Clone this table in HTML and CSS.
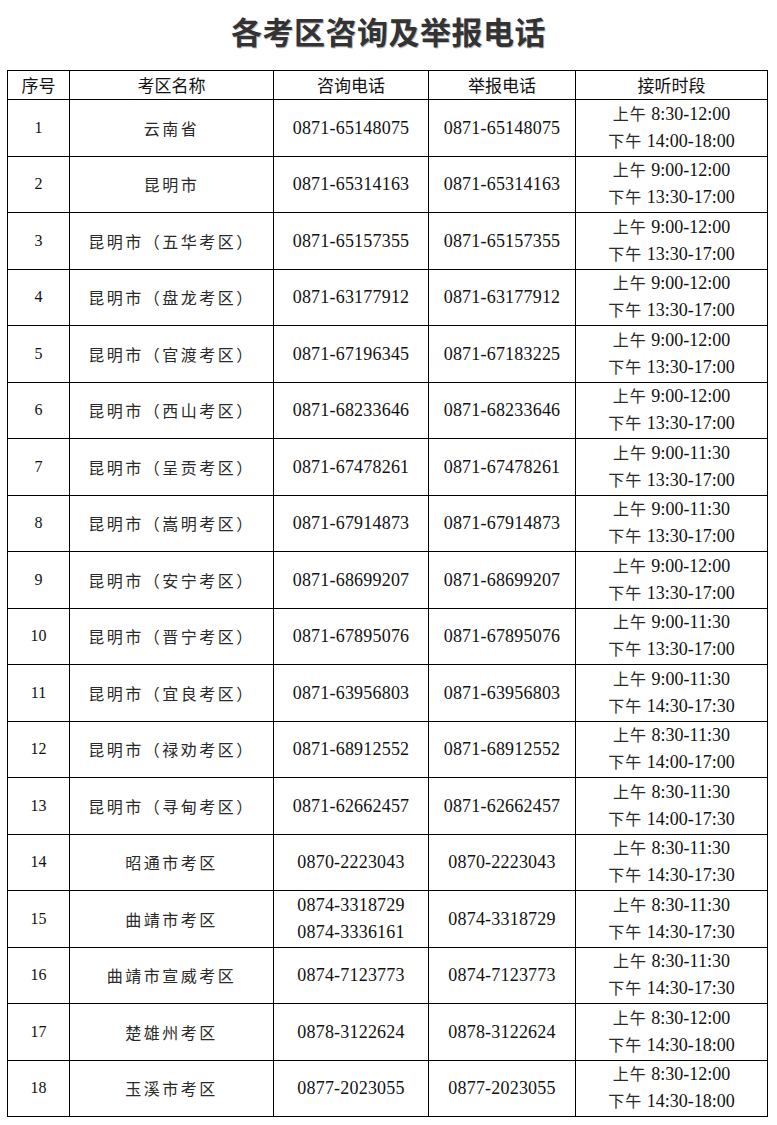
FILE: index.html
```html
<!DOCTYPE html>
<html lang="zh-CN">
<head>
<meta charset="utf-8">
<title>各考区咨询及举报电话</title>
<link rel="stylesheet" href="styles.css">
</head>
<body>
<h1 class="title">各考区咨询及举报电话</h1>
<table class="contacts">
  <colgroup>
    <col class="c-no">
    <col class="c-name">
    <col class="c-tel">
    <col class="c-rep">
    <col class="c-time">
  </colgroup>
  <thead>
    <tr>
      <th>序号</th><th>考区名称</th><th>咨询电话</th><th>举报电话</th><th>接听时段</th>
    </tr>
  </thead>
  <tbody>
    <tr><td class="no">1</td><td class="name">云南省</td><td class="tel">0871-65148075</td><td class="tel">0871-65148075</td><td class="time"><div><span class="cn">上午</span> 8:30-12:00</div><div><span class="cn">下午</span> 14:00-18:00</div></td></tr>
    <tr><td class="no">2</td><td class="name">昆明市</td><td class="tel">0871-65314163</td><td class="tel">0871-65314163</td><td class="time"><div><span class="cn">上午</span> 9:00-12:00</div><div><span class="cn">下午</span> 13:30-17:00</div></td></tr>
    <tr><td class="no">3</td><td class="name">昆明市（五华考区）</td><td class="tel">0871-65157355</td><td class="tel">0871-65157355</td><td class="time"><div><span class="cn">上午</span> 9:00-12:00</div><div><span class="cn">下午</span> 13:30-17:00</div></td></tr>
    <tr><td class="no">4</td><td class="name">昆明市（盘龙考区）</td><td class="tel">0871-63177912</td><td class="tel">0871-63177912</td><td class="time"><div><span class="cn">上午</span> 9:00-12:00</div><div><span class="cn">下午</span> 13:30-17:00</div></td></tr>
    <tr><td class="no">5</td><td class="name">昆明市（官渡考区）</td><td class="tel">0871-67196345</td><td class="tel">0871-67183225</td><td class="time"><div><span class="cn">上午</span> 9:00-12:00</div><div><span class="cn">下午</span> 13:30-17:00</div></td></tr>
    <tr><td class="no">6</td><td class="name">昆明市（西山考区）</td><td class="tel">0871-68233646</td><td class="tel">0871-68233646</td><td class="time"><div><span class="cn">上午</span> 9:00-12:00</div><div><span class="cn">下午</span> 13:30-17:00</div></td></tr>
    <tr><td class="no">7</td><td class="name">昆明市（呈贡考区）</td><td class="tel">0871-67478261</td><td class="tel">0871-67478261</td><td class="time"><div><span class="cn">上午</span> 9:00-11:30</div><div><span class="cn">下午</span> 13:30-17:00</div></td></tr>
    <tr><td class="no">8</td><td class="name">昆明市（嵩明考区）</td><td class="tel">0871-67914873</td><td class="tel">0871-67914873</td><td class="time"><div><span class="cn">上午</span> 9:00-11:30</div><div><span class="cn">下午</span> 13:30-17:00</div></td></tr>
    <tr><td class="no">9</td><td class="name">昆明市（安宁考区）</td><td class="tel">0871-68699207</td><td class="tel">0871-68699207</td><td class="time"><div><span class="cn">上午</span> 9:00-12:00</div><div><span class="cn">下午</span> 13:30-17:00</div></td></tr>
    <tr><td class="no">10</td><td class="name">昆明市（晋宁考区）</td><td class="tel">0871-67895076</td><td class="tel">0871-67895076</td><td class="time"><div><span class="cn">上午</span> 9:00-11:30</div><div><span class="cn">下午</span> 13:30-17:00</div></td></tr>
    <tr><td class="no">11</td><td class="name">昆明市（宜良考区）</td><td class="tel">0871-63956803</td><td class="tel">0871-63956803</td><td class="time"><div><span class="cn">上午</span> 9:00-11:30</div><div><span class="cn">下午</span> 14:30-17:30</div></td></tr>
    <tr><td class="no">12</td><td class="name">昆明市（禄劝考区）</td><td class="tel">0871-68912552</td><td class="tel">0871-68912552</td><td class="time"><div><span class="cn">上午</span> 8:30-11:30</div><div><span class="cn">下午</span> 14:00-17:00</div></td></tr>
    <tr><td class="no">13</td><td class="name">昆明市（寻甸考区）</td><td class="tel">0871-62662457</td><td class="tel">0871-62662457</td><td class="time"><div><span class="cn">上午</span> 8:30-11:30</div><div><span class="cn">下午</span> 14:00-17:30</div></td></tr>
    <tr><td class="no">14</td><td class="name">昭通市考区</td><td class="tel">0870-2223043</td><td class="tel">0870-2223043</td><td class="time"><div><span class="cn">上午</span> 8:30-11:30</div><div><span class="cn">下午</span> 14:30-17:30</div></td></tr>
    <tr><td class="no">15</td><td class="name">曲靖市考区</td><td class="tel"><div>0874-3318729</div><div>0874-3336161</div></td><td class="tel">0874-3318729</td><td class="time"><div><span class="cn">上午</span> 8:30-11:30</div><div><span class="cn">下午</span> 14:30-17:30</div></td></tr>
    <tr><td class="no">16</td><td class="name">曲靖市宣威考区</td><td class="tel">0874-7123773</td><td class="tel">0874-7123773</td><td class="time"><div><span class="cn">上午</span> 8:30-11:30</div><div><span class="cn">下午</span> 14:30-17:30</div></td></tr>
    <tr><td class="no">17</td><td class="name">楚雄州考区</td><td class="tel">0878-3122624</td><td class="tel">0878-3122624</td><td class="time"><div><span class="cn">上午</span> 8:30-12:00</div><div><span class="cn">下午</span> 14:30-18:00</div></td></tr>
    <tr><td class="no">18</td><td class="name">玉溪市考区</td><td class="tel">0877-2023055</td><td class="tel">0877-2023055</td><td class="time"><div><span class="cn">上午</span> 8:30-12:00</div><div><span class="cn">下午</span> 14:30-18:00</div></td></tr>
  </tbody>
</table>
</body>
</html>
```

FILE: styles.css
```css
html, body {
  margin: 0;
  padding: 0;
  background: #fff;
}

body {
  font-family: "Liberation Serif", "Noto Sans CJK SC", serif;
  color: #111;
}

.title {
  margin: 0;
  height: 70px;
  line-height: 62px;
  text-align: center;
  font-family: "Noto Sans CJK SC", sans-serif;
  font-size: 31px;
  font-weight: 700;
  color: #333;
  letter-spacing: 0.5px;
  text-shadow: 1px 1px 0 rgba(0, 0, 0, 0.25);
}

.contacts {
  margin-left: 7px;
  width: 760px;
  border-collapse: collapse;
  table-layout: fixed;
}

.c-no { width: 62px; }
.c-name { width: 204px; }
.c-tel { width: 155px; }
.c-rep { width: 147px; }
.c-time { width: 192px; }

.contacts th,
.contacts td {
  border: 1.5px solid #000;
  padding: 0;
  text-align: center;
  vertical-align: middle;
}

.contacts thead tr {
  height: 29px;
}

.contacts th {
  font-family: "Noto Sans CJK SC", sans-serif;
  font-size: 17px;
  font-weight: 400;
  color: #111;
  line-height: 24px;
}

.contacts tbody tr {
  height: 56.5px;
}

.contacts td {
  line-height: 24px;
}

.no {
  font-family: "Liberation Serif", serif;
  font-size: 16px;
}

.name {
  font-family: "Noto Sans CJK SC", sans-serif;
  font-size: 16px;
  font-weight: 400;
  letter-spacing: 2.5px;
  color: #2a2a2a;
  padding-left: 3px;
}

.tel {
  font-family: "Liberation Serif", serif;
  font-size: 18px;
  letter-spacing: 0.2px;
}

.contacts .tel div,
.contacts .time div {
  height: 27px;
  line-height: 27px;
}

.time {
  font-family: "Liberation Serif", serif;
  font-size: 18px;
}

.time .cn {
  font-family: "Noto Sans CJK SC", sans-serif;
  font-size: 16px;
  font-weight: 400;
  line-height: 1;
  letter-spacing: 1px;
  color: #2a2a2a;
}
```
